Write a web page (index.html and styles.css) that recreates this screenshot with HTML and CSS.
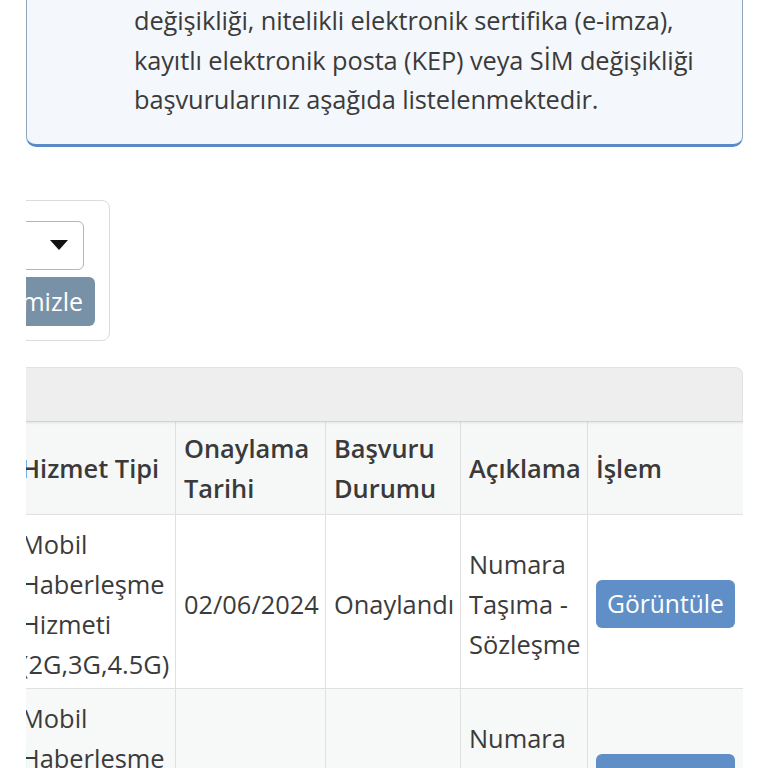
FILE: index.html
```html
<!DOCTYPE html>
<html lang="tr">
<head>
  <meta charset="UTF-8">
  <meta name="viewport" content="width=device-width, initial-scale=1.0">
  <title>Başvurularım</title>
  <link rel="stylesheet" href="styles.css">
</head>
<body>
  <div class="page">
    <div class="info-box">
      <p>değişikliği, nitelikli elektronik sertifika (e-imza), kayıtlı elektronik posta (KEP) veya SİM değişikliği başvurularınız aşağıda listelenmektedir.</p>
    </div>

    <div class="filter-card">
      <div class="select-box">
        <span class="caret"></span>
      </div>
      <button class="btn-clear">Temizle</button>
    </div>

    <div class="panel">
      <div class="panel-heading"></div>
      <table class="apps-table">
        <colgroup>
          <col class="col-type">
          <col class="col-date">
          <col class="col-status">
          <col class="col-desc">
          <col class="col-action">
        </colgroup>
        <thead>
          <tr>
            <th>Hizmet Tipi</th>
            <th>Onaylama Tarihi</th>
            <th>Başvuru Durumu</th>
            <th>Açıklama</th>
            <th>İşlem</th>
          </tr>
        </thead>
        <tbody>
          <tr>
            <td>Mobil Haberleşme Hizmeti (2G,3G,4.5G)</td>
            <td class="nowrap">02/06/2024</td>
            <td class="nowrap">Onaylandı</td>
            <td>Numara Taşıma - Sözleşme</td>
            <td><button class="btn-view">Görüntüle</button></td>
          </tr>
          <tr>
            <td>Mobil Haberleşme Hizmeti (2G,3G,4.5G)</td>
            <td class="nowrap">02/06/2024</td>
            <td class="nowrap">Onaylandı</td>
            <td>Numara Taşıma - Sözleşme</td>
            <td><button class="btn-view">Görüntüle</button></td>
          </tr>
        </tbody>
      </table>
    </div>
  </div>
</body>
</html>
```

FILE: styles.css
```css
body {
    margin: 0;
    background-color: #ffffff;
    font-family: 'Open Sans', 'Liberation Sans', sans-serif;
    font-size: 25.4px;
    line-height: 40px;
    color: #3b3b3b;
}
.page {
    margin-left: 26px;
    width: 717px;
    overflow: hidden;
    padding-bottom: 40px;
}
.info-box {
    margin-top: -26px;
    background-color: #f4f8fc;
    border: 1px solid #8fa5bd;
    border-bottom: 3px solid #5b8bc7;
    border-radius: 10px;
    padding: 26px 36px 24px 107px;
    line-height: 39.5px;
}
.info-box p {
    margin: 0;
    letter-spacing: -0.1px;
}
.filter-card {
    margin-top: 53px;
    margin-left: -116px;
    width: 200px;
    box-sizing: border-box;
    border: 1px solid #dcdcdc;
    border-radius: 8px;
    padding: 20px 14px 14px;
    display: flex;
    flex-direction: column;
    align-items: flex-end;
    gap: 7px;
}
.select-box {
    width: 150px;
    height: 49px;
    box-sizing: border-box;
    margin-right: 11px;
    border: 1px solid #b5b5b5;
    border-radius: 6px;
    display: flex;
    align-items: center;
    justify-content: flex-end;
    padding-right: 15px;
}
.caret {
    width: 0;
    height: 0;
    border-left: 9px solid transparent;
    border-right: 9px solid transparent;
    border-top: 10px solid #111111;
}
.btn-clear {
    height: 49px;
    padding: 0 12px;
    border: none;
    border-radius: 6px;
    background-color: #7891a6;
    color: #ffffff;
    font-family: inherit;
    font-size: 25px;
}
.panel {
    margin-top: 26px;
    margin-left: -14px;
}
.panel-heading {
    height: 53px;
    background-color: #eeeeee;
    border: 1px solid #e2e2e2;
    border-bottom: none;
    border-radius: 0 8px 0 0;
    box-shadow: 0 2px 3px rgba(0, 0, 0, 0.08);
    position: relative;
}
.apps-table {
    border-collapse: collapse;
    table-layout: fixed;
    width: 731px;
}
.col-type { width: 163px; }
.col-date { width: 150px; }
.col-status { width: 135px; }
.col-desc { width: 127px; }
.col-action { width: 156px; }
.apps-table th,
.apps-table td {
    border: 1px solid #e0e0e0;
    padding: 6px 8px;
    text-align: left;
    vertical-align: middle;
    font-weight: normal;
}
.apps-table td {
    padding: 9px 8px 4px;
}
.apps-table th {
    font-weight: 600;
    background-color: #f6f7f7;
    color: #3a3a3a;
}
.apps-table .nowrap {
    white-space: nowrap;
    overflow: visible;
}
.apps-table tbody tr:nth-child(even) td {
    background-color: #f7f8f8;
}
.btn-view {
    border: none;
    border-radius: 6px;
    background-color: #5f8fc6;
    color: #ffffff;
    font-family: inherit;
    font-size: 24.6px;
    line-height: 32px;
    padding: 8px 11px;
}
```
